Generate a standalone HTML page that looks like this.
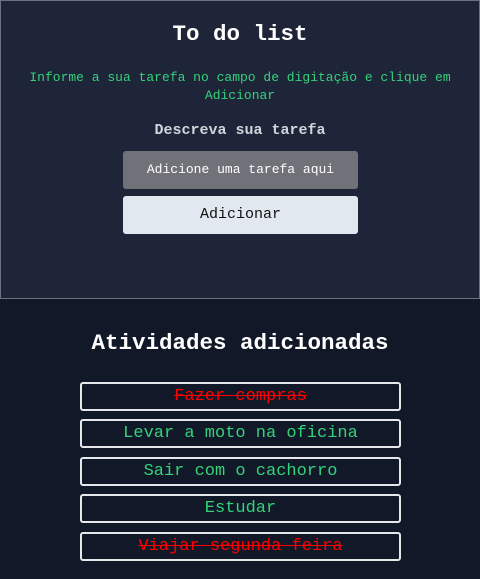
<!DOCTYPE html>
<html><head><meta charset="utf-8"><style>
*{margin:0;padding:0;box-sizing:border-box}
body{width:480px;height:579px;background:#111827;font-family:"Liberation Mono",monospace;overflow:hidden}
.top{position:absolute;left:0;top:0;width:480px;height:299px;background:#1e2538;border:1px solid #6b7280}
.c{position:absolute;left:0;width:100%;text-align:center;white-space:nowrap}
.box{position:absolute;left:122px;width:235px;height:38px;border-radius:3px;text-align:center;line-height:38px}
.item{position:absolute;left:80px;width:321px;height:29px;border:2px solid #e5e7eb;border-radius:3px;text-align:center;line-height:25px;font-size:17px;color:#34d27a}
.done{color:#ff0000;text-decoration:line-through}
</style></head><body>
<div class="top">
<div class="c" style="top:20px;font-size:22.5px;font-weight:bold;color:#fff">To do list</div>
<div class="c" style="top:68px;font-size:13px;line-height:18px;color:#34d27a">Informe a sua tarefa no campo de digitação e clique em<br>Adicionar</div>
<div class="c" style="top:121px;font-size:15px;font-weight:bold;color:#d1d5db">Descreva sua tarefa</div>
<div class="box" style="top:150px;background:#71717a;color:#fff;font-size:13px">Adicione uma tarefa aqui</div>
<div class="box" style="top:195px;background:#e2e8f0;color:#111;font-size:15px">Adicionar</div>
</div>
<div class="c" style="top:330px;font-size:22.5px;font-weight:bold;color:#fff">Atividades adicionadas</div>
<div class="item done" style="top:382px">Fazer compras</div>
<div class="item" style="top:419px">Levar a moto na oficina</div>
<div class="item" style="top:457px">Sair com o cachorro</div>
<div class="item" style="top:494px">Estudar</div>
<div class="item done" style="top:532px">Viajar segunda feira</div>
</body></html>
